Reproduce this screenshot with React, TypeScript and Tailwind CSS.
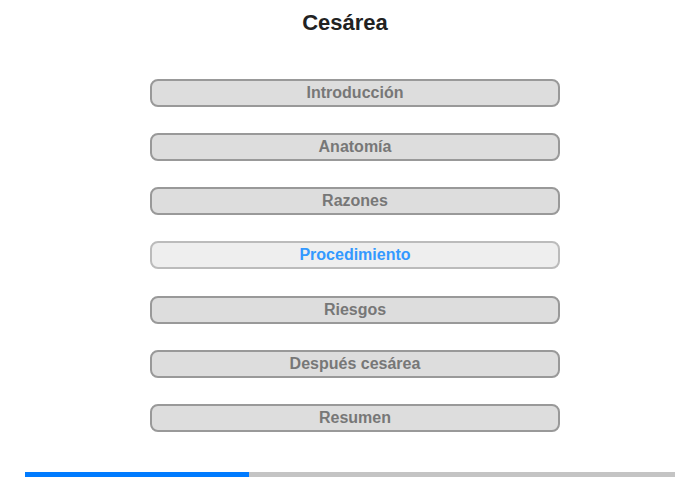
import React from 'react'

const items = ['Introducción', 'Anatomía', 'Razones', 'Procedimiento', 'Riesgos', 'Después cesárea', 'Resumen']
const active = 3

export default function App() {
  return (
    <div className="w-[700px] h-[480px] bg-white font-['Liberation_Sans',Arial,sans-serif]">
      <h1 className="pt-[10px] pr-[10px] text-center text-[22px] leading-[26px] font-bold text-[#222]">Cesárea</h1>
      <div className="mt-[43px] ml-[150px] flex flex-col gap-[26px]">
        {items.map((item, i) => (
          <div
            key={i}
            className={`w-[410px] h-[28px] rounded-[8px] border-2 flex items-center justify-center text-[16px] font-bold ${
              i === active ? 'bg-[#eeeeee] border-[#bbbbbb] text-[#3399ff]' : 'bg-[#dddddd] border-[#999999] text-[#777777]'
            } ${i === active + 1 ? 'mt-[1px]' : ''}`}
          >
            {item}
          </div>
        ))}
      </div>
      <div className="mt-[40px] mx-[25px] h-[5px] bg-[#c4c4c4] flex">
        <div className="w-[224px] h-full bg-[#007bff]" />
      </div>
    </div>
  )
}
